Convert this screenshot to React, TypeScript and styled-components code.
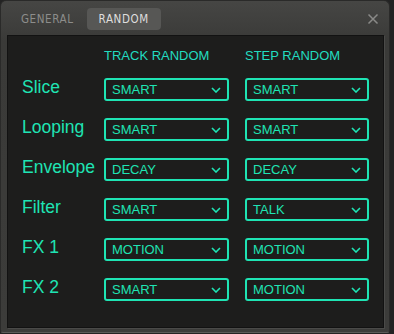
import React from "react";
import styled, { createGlobalStyle } from "styled-components";

const Global = createGlobalStyle`
  html, body { margin: 0; padding: 0; background: #232323; }
  body { font-family: "Liberation Sans", Arial, sans-serif; }
`;

const TEAL = "#1fe4b4";

const Window = styled.div`
  box-sizing: border-box;
  width: 390px;
  height: 333px;
  background: linear-gradient(#464644, #3a3a38 40px, #3c3c3a);
  border: 1px solid #2a2a29;
  border-bottom-color: #5a5a58;
  border-radius: 6px 6px 3px 3px;
  padding: 0 5px 4px 6px;
  display: flex;
  flex-direction: column;
`;

const TabBar = styled.div`
  height: 34px;
  display: flex;
  align-items: center;
  padding-left: 4px;
`;

const Tab = styled.div<{ $active?: boolean }>`
  height: 22px;
  display: flex;
  align-items: center;
  padding: 0 ${(p) => (p.$active ? "12px" : "10px")};
  margin-top: 2px;
  border-radius: 4px;
  background: ${(p) => (p.$active ? "#575755" : "transparent")};
  color: ${(p) => (p.$active ? "#dedede" : "#8d8d8b")};
  font-family: "DejaVu Sans Condensed", "DejaVu Sans", sans-serif;
  font-size: 11.5px;
  letter-spacing: 0.6px;
  margin-right: 3px;
`;

const Close = styled.div`
  margin-left: auto;
  margin-right: 5px;
  margin-top: 2px;
  width: 12px;
  height: 12px;
  display: flex;
`;

const Content = styled.div`
  flex: 1;
  background: #1d1d1c;
  border: 1px solid #121212;
  box-shadow: 1px 1px 0 #4a4a48;
  padding: 12px 0 0 14px;
`;

const Grid = styled.div`
  display: grid;
  grid-template-columns: 66px 125px 124px;
  column-gap: 16px;
`;

const Header = styled(Grid)`
  height: 15px;
  margin-bottom: 15px;
`;

const HeaderText = styled.div`
  color: #22dcc0;
  font-size: 13px;
  line-height: 15px;
`;

const Rows = styled(Grid)`
  grid-auto-rows: 23px;
  row-gap: 17px;
`;

const Label = styled.div`
  color: ${TEAL};
  font-size: 17.5px;
  display: flex;
  align-items: center;
  padding-bottom: 4px;
  white-space: nowrap;
`;

const Select = styled.div`
  box-sizing: border-box;
  height: 23px;
  border: 2px solid ${TEAL};
  border-radius: 3px;
  display: flex;
  align-items: center;
  padding: 0 6px 0 6px;
  color: ${TEAL};
  font-size: 13px;
`;

const Chevron = styled.svg`
  margin-left: auto;
  width: 10px;
  height: 6px;
`;

const rows: [string, string, string][] = [
  ["Slice", "SMART", "SMART"],
  ["Looping", "SMART", "SMART"],
  ["Envelope", "DECAY", "DECAY"],
  ["Filter", "SMART", "TALK"],
  ["FX 1", "MOTION", "MOTION"],
  ["FX 2", "SMART", "MOTION"],
];

const Dropdown = ({ value }: { value: string }) => (
  <Select>
    {value}
    <Chevron viewBox="0 0 10 6">
      <path d="M1 1 L5 5 L9 1" fill="none" stroke={TEAL} strokeWidth="1.6" />
    </Chevron>
  </Select>
);

export default function App() {
  return (
    <>
      <Global />
      <Window>
        <TabBar>
          <Tab>GENERAL</Tab>
          <Tab $active>RANDOM</Tab>
          <Close>
            <svg width="12" height="12" viewBox="0 0 12 12">
              <path d="M1.5 1.5 L10.5 10.5 M10.5 1.5 L1.5 10.5" stroke="#8a8a88" strokeWidth="1.5" />
            </svg>
          </Close>
        </TabBar>
        <Content>
          <Header>
            <div />
            <HeaderText>TRACK RANDOM</HeaderText>
            <HeaderText>STEP RANDOM</HeaderText>
          </Header>
          <Rows>
            {rows.map(([label, a, b]) => (
              <React.Fragment key={label}>
                <Label>{label}</Label>
                <Dropdown value={a} />
                <Dropdown value={b} />
              </React.Fragment>
            ))}
          </Rows>
        </Content>
      </Window>
    </>
  );
}
